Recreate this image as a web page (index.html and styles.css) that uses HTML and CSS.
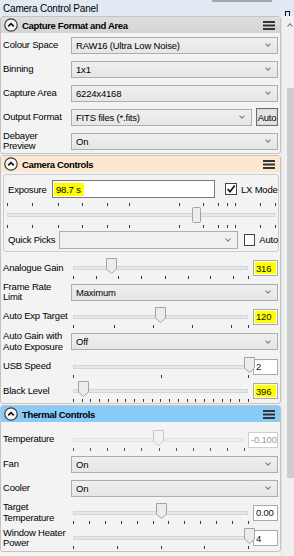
FILE: index.html
```html
<!DOCTYPE html>
<html lang="en">
<head>
    <meta charset="UTF-8">
    <title>Camera Control Panel</title>
    <link rel="stylesheet" href="styles.css">
</head>
<body>
    <div class="titlebar">
        <span>Camera Control Panel</span>
        <svg class="pin" width="7" height="10" viewBox="0 0 7 10"><rect x="1.5" y="0.5" width="4" height="5" fill="none" stroke="#111"/><rect x="0" y="5" width="7" height="1.5" fill="#111"/><rect x="3" y="6" width="1.2" height="4" fill="#111"/></svg>
    </div>
    <div class="main">
        <div class="panel">
            <div class="section">
                <div class="head grey">
                    <svg width="14" height="14" viewBox="0 0 14 14"><circle cx="7" cy="7" r="6.2" fill="#f7f7f7" stroke="#3a3a3a" stroke-width="1.2"/><path d="M4.2 8.4 L7 5.6 L9.8 8.4" fill="none" stroke="#111" stroke-width="1.6"/></svg>
                    <span>Capture Format and Area</span>
                    <svg class="menu" width="12" height="9" viewBox="0 0 12 9"><rect y="0" width="12" height="2" fill="#333"/><rect y="3.5" width="12" height="2" fill="#333"/><rect y="7" width="12" height="2" fill="#333"/></svg>
                </div>
                <div class="row"><div class="lbl">Colour Space</div><div class="combo">RAW16 (Ultra Low Noise)</div></div>
                <div class="row"><div class="lbl">Binning</div><div class="combo">1x1</div></div>
                <div class="row"><div class="lbl">Capture Area</div><div class="combo">6224x4168</div></div>
                <div class="row"><div class="lbl">Output Format</div><div class="combo">FITS files (*.fits)</div><div class="btn">Auto</div></div>
                <div class="row"><div class="lbl">Debayer<br>Preview</div><div class="combo">On</div></div>
            </div>

            <div class="section">
                <div class="head peach">
                    <svg width="14" height="14" viewBox="0 0 14 14"><circle cx="7" cy="7" r="6.2" fill="#f7f7f7" stroke="#3a3a3a" stroke-width="1.2"/><path d="M4.2 8.4 L7 5.6 L9.8 8.4" fill="none" stroke="#111" stroke-width="1.6"/></svg>
                    <span>Camera Controls</span>
                    <svg class="menu" width="12" height="9" viewBox="0 0 12 9"><rect y="0" width="12" height="2" fill="#333"/><rect y="3.5" width="12" height="2" fill="#333"/><rect y="7" width="12" height="2" fill="#333"/></svg>
                </div>
                <div class="group">
                    <div class="erow">
                        <span class="elbl">Exposure</span>
                        <div class="input"><span class="mark">98.7 s</span></div>
                        <span class="check on"><svg width="10" height="10" viewBox="0 0 10 10"><path d="M1.5 5 L4 7.8 L8.8 1.5" fill="none" stroke="#111" stroke-width="1.6"/></svg></span>
                        <span class="clbl">LX Mode</span>
                    </div>
                    <div class="slider wide" data-ticks="2,27,53,77,102,124,174,198,213,222,230,255,270" data-thumb="187"></div>
                    <div class="qrow">
                        <span class="qlbl">Quick Picks</span>
                        <div class="combo qp"></div>
                        <span class="check"></span>
                        <span class="clbl">Auto</span>
                    </div>
                </div>
                <div class="row"><div class="lbl">Analogue Gain</div><div class="slider" data-ticks="2,25,47,70,94,117,139,162,177" data-thumb="35"></div><div class="val hl">316</div></div>
                <div class="row"><div class="lbl">Frame Rate<br>Limit</div><div class="combo">Maximum</div></div>
                <div class="row r25"><div class="lbl">Auto Exp Target</div><div class="slider" data-ticks="2,43,82,121,160,177" data-thumb="84"></div><div class="val hl">120</div></div>
                <div class="row r25"><div class="lbl">Auto Gain with<br>Auto Exposure</div><div class="combo">Off</div></div>
                <div class="row r25"><div class="lbl">USB Speed</div><div class="slider" data-ticks="2,90,177" data-thumb="173"></div><div class="val">2</div></div>
                <div class="row"><div class="lbl">Black Level</div><div class="slider" data-ticks="2,11,19,28,37,46,54,63,72,81,89,98,107,116,124,133,142,151,159,168,177" data-thumb="7"></div><div class="val hl">396</div></div>
            </div>

            <div class="section thermal">
                <div class="head blue">
                    <svg width="14" height="14" viewBox="0 0 14 14"><circle cx="7" cy="7" r="6.2" fill="#f7f7f7" stroke="#3a3a3a" stroke-width="1.2"/><path d="M4.2 8.4 L7 5.6 L9.8 8.4" fill="none" stroke="#111" stroke-width="1.6"/></svg>
                    <span>Thermal Controls</span>
                    <svg class="menu" width="12" height="9" viewBox="0 0 12 9"><rect y="0" width="12" height="2" fill="#333"/><rect y="3.5" width="12" height="2" fill="#333"/><rect y="7" width="12" height="2" fill="#333"/></svg>
                </div>
                <div class="row r25"><div class="lbl">Temperature</div><div class="slider off" data-ticks="2,19,36,53,70,88,105,122,139,156,173" data-thumb="82"></div><div class="val dis">-0.100</div></div>
                <div class="row"><div class="lbl">Fan</div><div class="combo">On</div></div>
                <div class="row"><div class="lbl">Cooler</div><div class="combo">On</div></div>
                <div class="row r25"><div class="lbl">Target<br>Temperature</div><div class="slider" data-ticks="2,18,34,50,66,82,97,113,129,145,161,177" data-thumb="85"></div><div class="val">0.00</div></div>
                <div class="row r26"><div class="lbl">Window Heater<br>Power</div><div class="slider" data-ticks="2,46,90,133,177" data-thumb="173"></div><div class="val">4</div></div>
            </div>
        </div>
        <div class="scrollbar">
            <span class="sarrow"></span>
            <div class="sthumb"></div>
        </div>
    </div>

    <script>
        var sliders = document.getElementsByClassName('slider');
        for (var i = 0; i < sliders.length; i++) {
            var s = sliders[i];
            var wide = s.classList.contains('wide');
            var ticks = s.dataset.ticks.split(',');
            var html = '<div class="groove"></div>';
            var rows = wide ? ['top', 'bottom'] : ['bottom'];
            for (var r = 0; r < rows.length; r++) {
                for (var t = 0; t < ticks.length; t++) {
                    html += '<i class="tick ' + rows[r] + '" style="left:' + ticks[t] + 'px"></i>';
                }
            }
            if (wide) {
                html += '<svg class="thumb" style="left:' + s.dataset.thumb + 'px" width="9" height="16"><path d="M1.5 0.5 H7.5 Q8.5 0.5 8.5 1.5 V14.5 Q8.5 15.5 7.5 15.5 H1.5 Q0.5 15.5 0.5 14.5 V1.5 Q0.5 0.5 1.5 0.5 Z"/></svg>';
            } else {
                html += '<svg class="thumb" style="left:' + s.dataset.thumb + 'px" width="11" height="16"><path d="M0.5 0.5 H10.5 V11 L5.5 15.5 L0.5 11 Z"/></svg>';
            }
            s.innerHTML = html;
        }
    </script>
</body>
</html>
```

FILE: styles.css
```css
* {
    margin: 0;
    padding: 0;
    box-sizing: border-box;
}

body {
    width: 294px;
    height: 556px;
    overflow: hidden;
    background: #f3f3f3;
    font-family: "Liberation Sans", Arial, sans-serif;
    font-size: 9.5px;
    letter-spacing: -0.2px;
    color: #000;
}

.titlebar {
    height: 16px;
    display: flex;
    align-items: center;
    padding: 0 2px 0 3px;
    font-size: 10px;
    background: linear-gradient(#a8a8a8, #a8a8a8) no-repeat 212px 0 / 60px 2px, #e1e9f3;
}

.pin {
    margin-left: auto;
    margin-right: 1px;
    align-self: flex-end;
    margin-bottom: -5px;
}

.main {
    display: flex;
    height: 540px;
}

.panel {
    width: 281px;
    flex: none;
}

.section {
    border: 1px solid #c3c3c3;
    border-radius: 3px;
    margin-bottom: 1px;
}

.thermal {
    margin-top: 1px;
}

.head {
    height: 16px;
    display: flex;
    align-items: center;
    gap: 4px;
    padding: 0 5px 0 3px;
    font-weight: bold;
    letter-spacing: -0.35px;
}

.head .menu {
    margin-left: auto;
}

.grey {
    background: linear-gradient(#dedede, #d4d4d4);
}

.peach {
    background: #fce7d1;
}

.blue {
    background: #88cbf6;
}

.row {
    display: flex;
    align-items: center;
    height: 24px;
    padding: 0 2px 0 2px;
}

.r25 {
    height: 25px;
}

.r26 {
    height: 26px;
}

.thermal .head {
    margin-bottom: 5px;
}

.lbl {
    width: 68px;
    flex: none;
    line-height: 10.5px;
    white-space: nowrap;
}

.combo {
    flex: 1;
    height: 17px;
    display: flex;
    align-items: center;
    padding-left: 4px;
    border: 1px solid #adadad;
    background: linear-gradient(#efefef, #e6e6e6);
}

.combo::after {
    content: "";
    margin-left: auto;
    margin-right: 7px;
    width: 3px;
    height: 3px;
    border-right: 1px solid #7a7a7a;
    border-bottom: 1px solid #7a7a7a;
    transform: translateY(-1px) rotate(45deg);
}

.btn {
    width: 22px;
    height: 18px;
    margin-left: 4px;
    display: flex;
    align-items: center;
    justify-content: center;
    border: 1px solid #6d6d6d;
    box-shadow: inset 0 0 0 1px #d8d8d8;
    background: #e3e3e3;
}

.group {
    margin: 2px 1px 4px 2px;
    border: 1px solid #cdcdcd;
    border-radius: 3px;
}

.erow {
    display: flex;
    align-items: center;
    height: 22px;
    margin-top: 3px;
    padding-left: 4px;
}

.elbl {
    width: 44px;
}

.input {
    width: 163px;
    height: 18px;
    display: flex;
    align-items: center;
    padding-left: 1px;
    border: 1px solid #7a7a7a;
    background: #fff;
}

.mark {
    background: #ffff00;
    line-height: 13px;
    padding: 0 3px 0 2px;
}

.check {
    width: 12px;
    height: 12px;
    margin-left: 10px;
    display: flex;
    align-items: center;
    justify-content: center;
    border: 1px solid #444;
    background: #fff;
}

.clbl {
    margin-left: 4px;
}

.qrow {
    display: flex;
    align-items: center;
    height: 23px;
    padding-left: 4px;
}

.qlbl {
    width: 53px;
}

.combo.qp {
    flex: none;
    width: 179px;
    height: 18px;
    background: #f0f0f0;
}

.qrow .check {
    margin-left: 6px;
}

.slider {
    flex: 1;
    height: 24px;
    position: relative;
    align-self: center;
}

.slider.wide {
    flex: none;
    height: 28px;
    margin: 0 1px 0 1px;
}

.groove {
    position: absolute;
    left: 2px;
    right: 2px;
    top: 10px;
    height: 4px;
    border: 1px solid #d6d6d6;
    background: #e7e7e7;
}

.wide .groove {
    top: 13px;
}

.tick {
    position: absolute;
    width: 1px;
    height: 3px;
    background: #3a3a3a;
}

.tick.bottom {
    top: 20px;
}

.wide .tick.top {
    top: 3px;
}

.wide .tick.bottom {
    top: 25px;
}

.thumb {
    position: absolute;
    top: 2px;
}

.wide .thumb {
    top: 7px;
}

.thumb path {
    fill: #ececec;
    stroke: #a3a3a3;
}

.off .groove {
    background: #ececec;
    border-color: #e0e0e0;
}

.off .thumb path {
    fill: #f2f2f2;
    stroke: #c6c6c6;
}

.off .tick {
    background: #555;
}

.val {
    width: 25px;
    height: 16px;
    margin-left: 3px;
    display: flex;
    align-items: center;
    padding-left: 2px;
    border: 1px solid #a9a9a9;
    background: #fff;
    color: #111;
}

.val.hl {
    background: #ffff00;
    box-shadow: inset 0 0 0 1px #fff;
}

.val.dis {
    width: 30px;
    color: #9a9a9a;
    border-color: #cfcfcf;
}

.scrollbar {
    flex: 1;
    display: flex;
    flex-direction: column;
    align-items: flex-end;
    background: #f0f0f0;
    border-left: 1px solid #e2e2e2;
}

.sarrow {
    width: 4px;
    height: 4px;
    margin: 8px 2px 0 0;
    border-left: 1px solid #777;
    border-top: 1px solid #777;
    transform: rotate(45deg);
}

.sthumb {
    width: 7px;
    height: 390px;
    margin-top: 60px;
    background: #cdcdcd;
}
```
